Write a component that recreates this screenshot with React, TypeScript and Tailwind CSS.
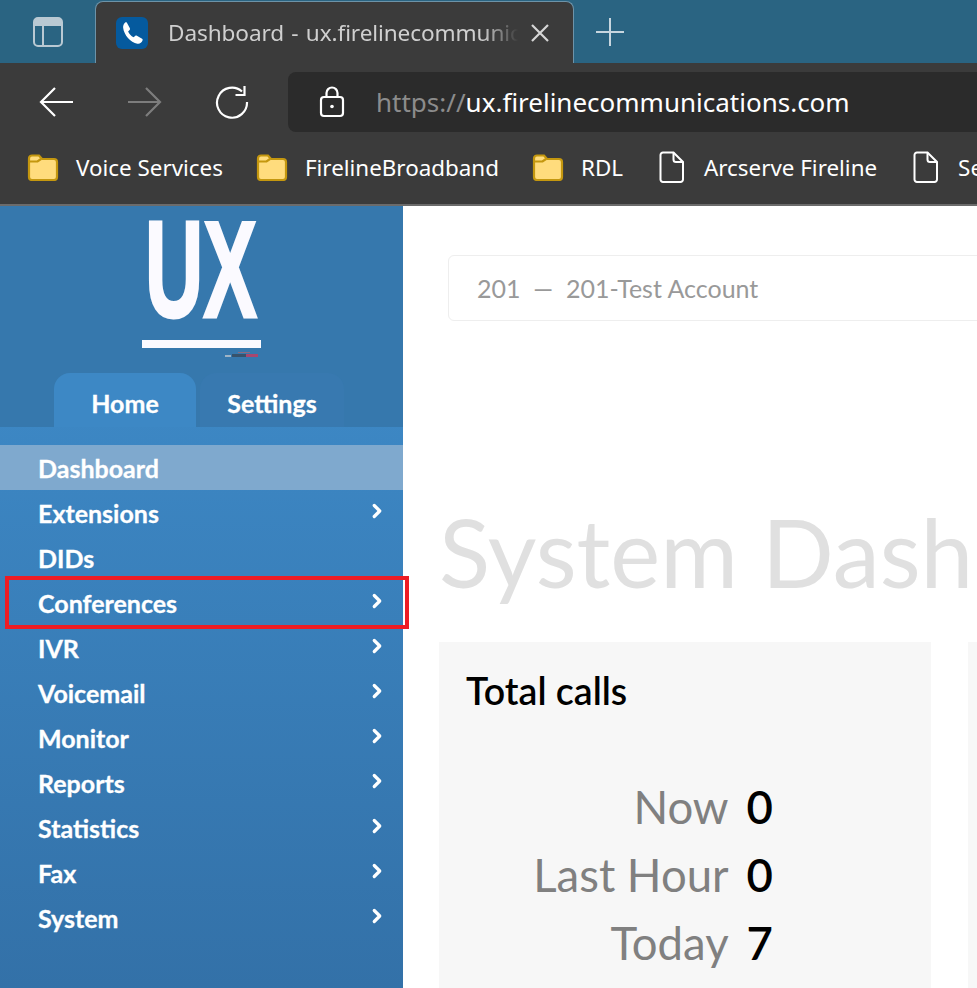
import { ChevronRight } from "lucide-react";

const bookmarks = [
	{ label: "Voice Services", kind: "folder" },
	{ label: "FirelineBroadband", kind: "folder" },
	{ label: "RDL", kind: "folder" },
	{ label: "Arcserve Fireline", kind: "file" },
	{ label: "Security", kind: "file" },
];

const menu = [
	{ label: "Dashboard", active: true },
	{ label: "Extensions", arrow: true },
	{ label: "DIDs" },
	{ label: "Conferences", arrow: true, marked: true },
	{ label: "IVR", arrow: true },
	{ label: "Voicemail", arrow: true },
	{ label: "Monitor", arrow: true },
	{ label: "Reports", arrow: true },
	{ label: "Statistics", arrow: true },
	{ label: "Fax", arrow: true },
	{ label: "System", arrow: true },
];

const totals = [
	{ label: "Now", value: 0 },
	{ label: "Last Hour", value: 0 },
	{ label: "Today", value: 7 },
];

function FolderIcon() {
	return (
		<svg width="32" height="28" viewBox="0 0 32 28" className="-ml-[1px] shrink-0">
			<path d="M2 5.500a3 3 0 0 1 3-3h7l3 3.500h12a3 3 0 0 1 3 3v15a3 3 0 0 1-3 3H5a3 3 0 0 1-3-3z" fill="#ffdc7d" stroke="#c4970f" strokeWidth="2.200" />
			<path d="M2 8.500h8.500l3.500-2.500" fill="none" stroke="#c4970f" strokeWidth="2.200" />
		</svg>
	);
}

function FileIcon() {
	return (
		<svg width="26" height="32" viewBox="0 0 26 32" fill="none" stroke="#fff" strokeWidth="2" className="ml-[2px] shrink-0">
			<path d="M4 1.500h10.500L24 11v17.500a2.500 2.500 0 0 1-2.500 2.500h-17.500A2.500 2.500 0 0 1 1.500 28.500V4A2.500 2.500 0 0 1 4 1.500z" />
			<path d="M14.500 1.500V8.500a2.500 2.500 0 0 0 2.500 2.500H24" />
		</svg>
	);
}

function BrowserChrome() {
	return (
		<div className="shrink-0 font-['Noto_Sans',sans-serif]">
			{/* tab strip */}
			<div className="flex h-[63px] items-end bg-[#2a6482]">
				<div className="flex h-[63px] w-[95px] items-center justify-center">
					<svg width="30" height="30" viewBox="0 0 30 30" fill="none">
						<rect x="1" y="1" width="28" height="28" rx="4" stroke="#b9c9d3" strokeWidth="2" />
						<path d="M1 5a4 4 0 0 1 4-4h20a4 4 0 0 1 4 4v4H1z" fill="#b9c9d3" />
						<path d="M10 9v20" stroke="#b9c9d3" strokeWidth="2" />
					</svg>
				</div>
				<div className="flex h-[62px] w-[479px] items-center rounded-t-lg border border-b-0 border-[#6d93a8] bg-[#3b3b3b] pl-[20px]">
					<div className="flex h-8 w-8 shrink-0 items-center justify-center rounded-md bg-[#055a9e]">
						<svg width="25" height="27" viewBox="0 0 24 24" fill="#fff">
							<path d="M6.500 2.500 9.500 8c.3.600.2 1.200-.3 1.700L7.800 11c1 2.300 2.800 4.300 5.200 5.600l1.500-1.300c.5-.4 1.100-.5 1.700-.2l5 3c.5.300.7.800.5 1.400-.8 2.300-2.800 3.700-5 3.300C10 21.500 3.800 14.500 3 7.500c-.2-2.200.7-4.300 2-5.200.5-.3 1.100-.2 1.500.2z" />
						</svg>
					</div>
					<div className="ml-[20px] w-[350px] overflow-hidden whitespace-nowrap text-[22.600px] tracking-[-0.1px] text-[#cfcfcf] [word-spacing:1.500px] [mask-image:linear-gradient(to_right,black_90%,transparent)]">
						Dashboard - ux.firelinecommunications.com
					</div>
					<svg width="18" height="18" viewBox="0 0 18 18" stroke="#d6d6d6" strokeWidth="2.200" className="ml-[13px]">
						<path d="M1 1l16 16M17 1 1 17" />
					</svg>
				</div>
				<div className="flex h-[63px] items-center pl-[21px]">
					<svg width="30" height="30" viewBox="0 0 30 30" stroke="#c7d6df" strokeWidth="2">
						<path d="M15 1v28M1 15h28" />
					</svg>
				</div>
			</div>
			{/* toolbar */}
			<div className="flex h-[77px] items-center bg-[#3b3b3b]">
				<div className="flex w-[288px] items-center pl-[39px]">
					<svg width="35" height="32" viewBox="0 0 35 32" fill="none" stroke="#fff" strokeWidth="2.200">
						<path d="M34 16H2M16 2 2 16l14 14" />
					</svg>
					<svg width="35" height="32" viewBox="0 0 35 32" fill="none" stroke="#7d7d7d" strokeWidth="2.200" className="ml-[53px]">
						<path d="M1 16h32M19 2l14 14-14 14" />
					</svg>
					<svg width="34" height="34" viewBox="0 0 34 34" fill="none" stroke="#fff" strokeWidth="2.200" className="ml-[53px]">
						<path d="M27 6.500A15 15 0 1 0 32 17" />
						<path d="M29.500 1v9h-9" />
					</svg>
				</div>
				<div className="flex h-[60px] flex-1 items-center rounded-l-lg bg-[#2b2b2b] pl-[31px] text-[26px]">
					<svg width="26" height="32" viewBox="0 0 26 32" fill="none" stroke="#fff" strokeWidth="2.200">
						<rect x="2" y="11" width="22" height="19" rx="3" />
						<path d="M7.500 11V7a5.500 5.500 0 0 1 11 0v4" />
						<circle cx="13" cy="20.500" r="1.800" fill="#fff" stroke="none" />
					</svg>
					<span className="ml-[31px] mt-[2px] text-[#8c8c8c]">https://</span>
					<span className="mt-[2px] text-white">ux.firelinecommunications.com</span>
				</div>
			</div>
			{/* bookmarks */}
			<div className="flex h-[66px] items-center overflow-hidden whitespace-nowrap border-b-2 border-[#6b6b6b] bg-[#3b3b3b] pb-[9px] pl-[28px] text-[22.400px] text-white">
				{bookmarks.map((b) => (
					<div key={b.label} className={`mr-[34px] flex shrink-0 items-center ${b.kind === "folder" ? "gap-[17px]" : "gap-[19px]"}`}>
						{b.kind === "folder" ? <FolderIcon /> : <FileIcon />}
						<span>{b.label}</span>
					</div>
				))}
			</div>
		</div>
	);
}

function UxLogo() {
	return (
		<svg width="124" height="142" viewBox="0 0 124 142" className="block">
			<text x="3" y="101" fontFamily="Liberation Sans" fontWeight="700" fontSize="138" fill="#fbfaff" stroke="#fbfaff" strokeWidth="3" textLength="112" lengthAdjust="spacingAndGlyphs">
				UX
			</text>
			<rect x="0" y="124" width="119" height="8" fill="#fbfaff" />
			<rect x="83" y="139" width="6" height="2" fill="#9fb4c6" />
			<rect x="90" y="138" width="14" height="3" fill="#37526b" />
			<rect x="104" y="138" width="12" height="3" fill="#a8476f" />
			<rect x="96" y="136" width="12" height="1" fill="#8a6a80" />
		</svg>
	);
}

function Sidebar() {
	return (
		<aside className="flex w-[403px] shrink-0 flex-col bg-gradient-to-b from-[#3d88c5] from-[24%] to-[#3371a8] font-['Lato',sans-serif] font-bold text-white [-webkit-text-stroke:0.3px_white]">
			<div className="bg-[#3678ad]">
				<div className="flex h-[167px] justify-center pl-[5px] pt-[10px]">
					<UxLogo />
				</div>
				<div className="flex gap-[4px] pl-[54px] text-[25px]">
					<div className="flex h-[54px] w-[142px] items-center justify-center rounded-t-2xl bg-[#3d88c5] pt-[8px]">Home</div>
					<div className="flex h-[54px] w-[144px] items-center justify-center rounded-t-2xl bg-[#3879b0] pt-[8px]">Settings</div>
				</div>
			</div>
			<ul className="pt-[18px] text-[25px]">
				{menu.map((item) => (
					<li
						key={item.label}
						className={`relative flex h-[45px] items-center justify-between pl-[38px] pr-[15px] ${item.active ? "bg-[#7fa9ce]" : ""}`}
					>
						<span className="mt-[2px]">{item.label}</span>
						{item.arrow && <ChevronRight size={22} strokeWidth={3.500} className="-mt-[3px]" />}
						{item.marked && <div className="absolute -top-[4px] left-[5px] h-[53px] w-[404px] border-[4px] border-[#ed1c24]" />}
					</li>
				))}
			</ul>
		</aside>
	);
}

export default function App() {
	return (
		<div className="flex h-[988px] w-[977px] flex-col overflow-hidden bg-white">
			<BrowserChrome />
			<div className="flex min-h-0 flex-1">
				<Sidebar />
				<main className="min-w-0 flex-1 overflow-hidden font-['Lato',sans-serif]">
					<div className="ml-[45px] mt-[49px] flex h-[66px] w-[600px] items-center rounded-md border border-[#eeeeee] pl-[28px] pt-[2px] text-[25px] text-[#999999]">
						201 &nbsp;— &nbsp;201-Test Account
					</div>
					<h1 className="ml-[36px] mt-[176px] h-[145px] whitespace-nowrap text-[94.500px] font-normal leading-[110px] text-[#e0e0e0]">
						System Dashboard
					</h1>
					<div className="flex gap-[37px] pl-[36px]">
						<section className="h-[400px] w-[492px] shrink-0 bg-[#f7f7f7] pl-[27px] pt-[26px]">
							<h2 className="text-[37.500px] font-semibold leading-[46px] text-black">Total calls</h2>
							<div className="mt-[59px] grid w-[307px] grid-cols-[1fr_auto] gap-x-[18px] text-[45.500px] leading-[68px]">
								{totals.map((t) => (
									<div key={t.label} className="contents">
										<span className="text-right text-[#808080]">{t.label}</span>
										<span className="font-semibold text-black">{t.value}</span>
									</div>
								))}
							</div>
						</section>
						<section className="h-[400px] w-[300px] shrink-0 bg-[#f7f7f7]" />
					</div>
				</main>
			</div>
		</div>
	);
}
